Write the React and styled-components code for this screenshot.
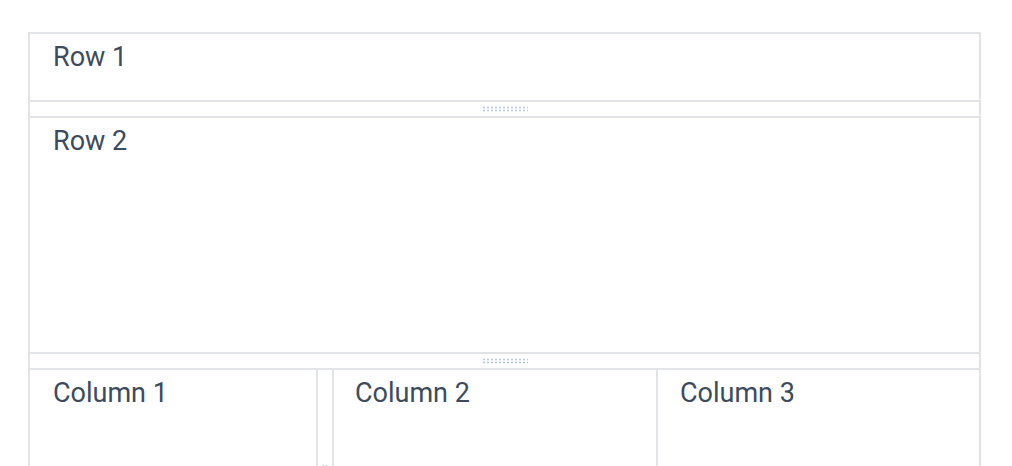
import React from "react";
import styled, { createGlobalStyle } from "styled-components";

const Global = createGlobalStyle`
  html, body { margin: 0; padding: 0; background: #ffffff; }
  body { font-family: Roboto, "Noto Sans", "Liberation Sans", sans-serif; overflow: hidden; }
`;

const line = "2px solid #e1e3e6";

const Page = styled.div`
  padding: 32px 31px 0 28px;
  height: 466px;
  box-sizing: border-box;
  overflow: hidden;
`;

const Frame = styled.div`
  display: flex;
  flex-direction: column;
  width: 953px;
  box-sizing: border-box;
`;

const Panel = styled.div`
  box-sizing: border-box;
  border: ${line};
  border-left: ${(p) => (p.$noLeft ? "none" : line)};
  height: ${(p) => p.$h}px;
  padding: 7px 23px 7px ${(p) => p.$pl ?? 23}px;
  color: #3d4b5e;
  font-size: 27px;
  line-height: 32px;
  flex: ${(p) => (p.$w ? `0 0 ${p.$w}px` : "none")};
`;

const HGutter = styled.div`
  height: 14px;
  display: flex;
  align-items: center;
  justify-content: center;
  border-left: ${line};
  border-right: ${line};
`;

const VGutter = styled.div`
  flex: 0 0 14px;
  display: flex;
  align-items: center;
  justify-content: center;
  border-top: ${line};
`;

const HHandle = styled.div`
  width: 46px;
  height: 6px;
  background-image: radial-gradient(circle, #b3c8e1 0.9px, transparent 1.2px);
  background-size: 4px 3px;
`;

const VHandle = styled.div`
  width: 6px;
  height: 46px;
  background-image: radial-gradient(circle, #b3c8e1 0.9px, transparent 1.2px);
  background-size: 3px 4px;
`;

const ColumnRow = styled.div`
  display: flex;
  height: 236px;
`;

export default function App() {
  return (
    <>
      <Global />
      <Page>
        <Frame>
          <Panel $h={70}>Row 1</Panel>
          <HGutter>
            <HHandle />
          </HGutter>
          <Panel $h={238}>Row 2</Panel>
          <HGutter>
            <HHandle />
          </HGutter>
          <ColumnRow>
            <Panel $h={236} $w={290}>Column 1</Panel>
            <VGutter>
              <VHandle />
            </VGutter>
            <Panel $h={236} $w={326} $pl={21}>Column 2</Panel>
            <Panel $h={236} $w={323} $pl={22} $noLeft>Column 3</Panel>
          </ColumnRow>
        </Frame>
      </Page>
    </>
  );
}
